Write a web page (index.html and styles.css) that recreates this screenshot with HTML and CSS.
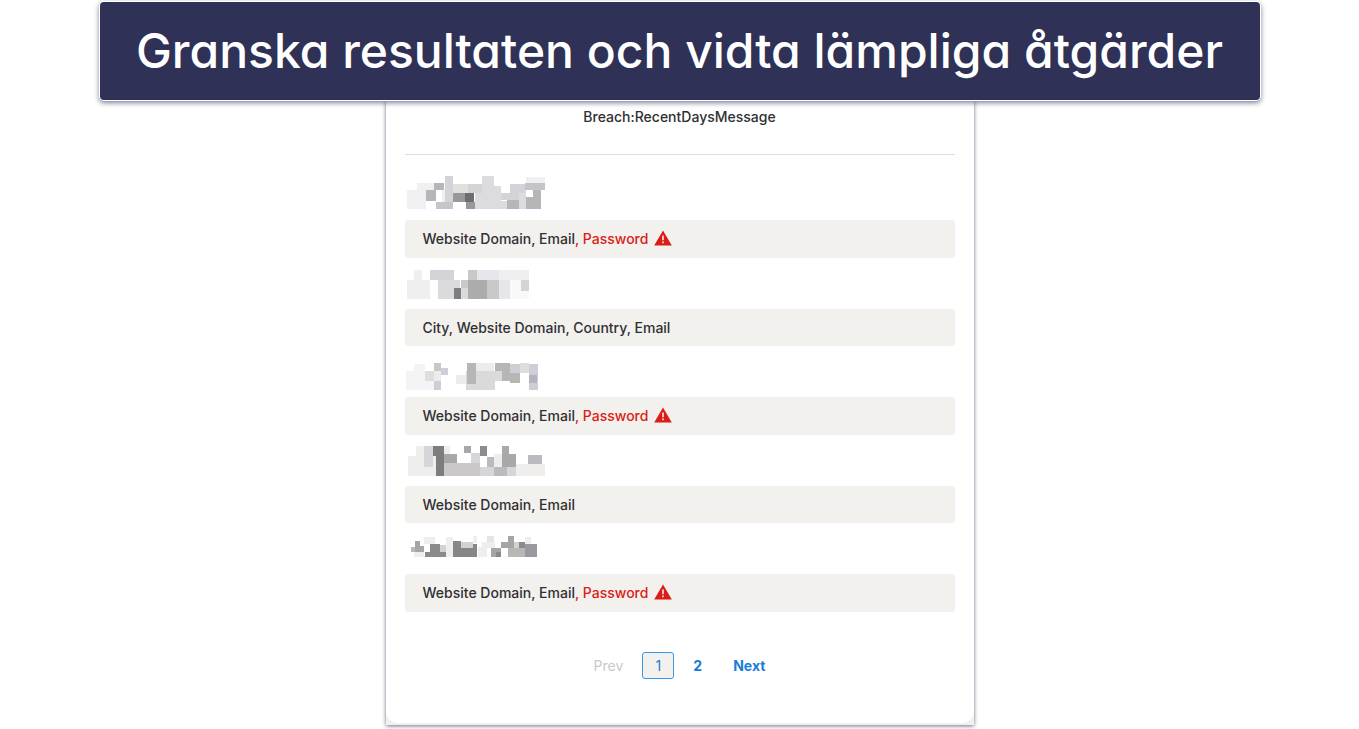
FILE: index.html
```html
<!DOCTYPE html>
<html lang="sv">
<head>
    <meta charset="UTF-8">
    <meta name="viewport" content="width=device-width, initial-scale=1.0">
    <title>Granska resultaten</title>
    <link rel="stylesheet" href="styles.css">
</head>
<body>
    <h1 class="banner">Granska resultaten och vidta lämpliga åtgärder</h1>
    <main class="frame">
        <div class="card">
            <p class="message">Breach:RecentDaysMessage</p>
            <ul class="breaches">
                <li>
                    <svg class="redacted" viewBox="30 -3 480 153" shape-rendering="crispEdges" aria-hidden="true">
                        <path fill="#f0f0f2" d="M35 60h58v57H35zM65 38h52v22H65zM393 20h57v20h-57zM140 60h10v36h-10z"/>
                        <path fill="#dcdcde" d="M239 68h78v49h-78zM260 18h37v50h-37zM297 47h20v21h-20zM317 93h20v24h-20zM372 60h20v57h-20z"/>
                        <path fill="#e1e0de" d="M174 41h44v28h-44z"/>
                        <path fill="#d3d3d8" d="M149 18h24v78h-24zM218 41h42v28h-42zM345 41h45v28h-45zM317 68h27v23h-27zM344 68h28v22h-28z"/>
                        <path fill="#c4c4ca" d="M390 40h60v20h-60zM124 96h49v21h-49z"/>
                        <path fill="#b6b6b8" d="M117 38h31v22h-31zM93 60h31v34H93zM337 90h35v27h-35zM393 80h45v37h-45zM413 60h25v20h-25z"/>
                        <path fill="#97979d" d="M174 69h36v27h-36zM212 96h27v21h-27z"/>
                        <path fill="#6d6d6f" d="M210 69h26v27h-26z"/>
                    </svg>
                    <p class="exposed">Website Domain, Email<span class="danger">, Password <svg class="warning" viewBox="0 0 18 16" role="img" aria-label="Warning"><path fill="#dc1c16" d="M9 0.5 17.8 15.5H0.2z"/><path stroke="#f2f1ed" stroke-width="1.6" d="M9 5.4v4.8M9 11.6v1.7"/></svg></span></p>
                </li>
                <li>
                    <svg class="redacted" viewBox="30 -12 480 153" shape-rendering="crispEdges" aria-hidden="true">
                        <path fill="#f0eff0" d="M56 24h25v30H56zM36 54h69v57H36zM312 24h90v30h-90z"/>
                        <path fill="#f9f9fa" d="M344 54h34v57h-34zM378 87h24v24h-24z"/>
                        <path fill="#e7e7eb" d="M246 24h66v30h-66zM312 54h32v57h-32z"/>
                        <path fill="#d3d3d8" d="M105 24h73v30h-73zM378 54h24v33h-24z"/>
                        <path fill="#dadbdc" d="M129 54h66v57h-66zM197 78h22v33h-22z"/>
                        <path fill="#c9c9cb" d="M220 24h26v30h-26zM276 54h36v57h-36zM197 54h24v24h-24z"/>
                        <path fill="#acacaa" d="M220 54h56v57h-56z"/>
                        <path fill="#7d7d7f" d="M178 78h19v33h-19z"/>
                    </svg>
                    <p class="exposed">City, Website Domain, Country, Email</p>
                </li>
                <li>
                    <svg class="redacted" viewBox="30 -24 480 153" shape-rendering="crispEdges" aria-hidden="true">
                        <path fill="#f3f4f5" d="M33 51h84v57H33zM56 30h35v21H56z"/>
                        <path fill="#ececec" d="M183 63h29v27h-29zM117 52h21v29h-21zM242 26h56v26h-56z"/>
                        <path fill="#dfdedc" d="M91 52h26v29H91zM375 26h28v30h-28z"/>
                        <path fill="#dadadb" d="M212 52h112v28H212zM212 80h87v28h-87z"/>
                        <path fill="#cecfd6" d="M138 42h22v21h-22zM117 81h21v27h-21zM345 30h30v27h-30zM403 30h25v78h-25z"/>
                        <path fill="#c9c8c6" d="M117 26h21v26h-21z"/>
                        <path fill="#b4b5bc" d="M299 26h24v26h-24zM403 63h23v23h-23z"/>
                        <path fill="#b6b6b5" d="M216 26h26v63h-26zM321 26h24v54h-24zM345 57h30v30h-30z"/>
                    </svg>
                    <p class="exposed">Website Domain, Email<span class="danger">, Password <svg class="warning" viewBox="0 0 18 16" role="img" aria-label="Warning"><path fill="#dc1c16" d="M9 0.5 17.8 15.5H0.2z"/><path stroke="#f2f1ed" stroke-width="1.6" d="M9 5.4v4.8M9 11.6v1.7"/></svg></span></p>
                </li>
                <li>
                    <svg class="redacted" viewBox="30 -15 480 153" shape-rendering="crispEdges" aria-hidden="true">
                        <path fill="#efeeed" d="M39 49h84v58H39zM64 18h26v31H64zM363 72h87v35h-87z"/>
                        <path fill="#ededf0" d="M297 42h25v39h-25zM148 18h18v25h-18z"/>
                        <path fill="#d5d5da" d="M88 18h25v63H88zM228 38h27v32h-27zM255 81h42v26h-42zM336 81h27v26h-27z"/>
                        <path fill="#cac8c8" d="M148 69h107v38H148z"/>
                        <path fill="#bbbbbf" d="M276 51h20v30h-20zM297 81h39v26h-39zM399 44h42v28h-42z"/>
                        <path fill="#a8a8a9" d="M146 43h41v26h-41zM207 18h21v21h-21zM321 18h21v63h-21zM342 42h21v39h-21z"/>
                        <path fill="#8c8c8f" d="M255 18h21v30h-21z"/>
                        <path fill="#7d7d80" d="M113 18h34v31h-34zM124 49h22v58h-22z"/>
                    </svg>
                    <p class="exposed">Website Domain, Email</p>
                </li>
                <li>
                    <svg class="redacted" viewBox="30 -21 480 153" shape-rendering="crispEdges" aria-hidden="true">
                        <path fill="#eeeeef" d="M88 20h32v22H88zM152 20h23v60h-23zM234 18h13v22h-13zM249 50h27v30h-27zM262 36h37v18h-37zM390 20h19v21h-19zM58 66h30v14H58z"/>
                        <path fill="#e3e3e8" d="M276 18h22v18h-22z"/>
                        <path fill="#d2d2d2" d="M134 44h20v23h-20zM197 35h37v20h-37zM357 36h15v20h-15z"/>
                        <path fill="#b7b7b6" d="M48 52h13v13H48zM340 55h77v25h-77z"/>
                        <path fill="#a5a5a5" d="M61 34h13v14H61zM61 48h26v18H61zM318 36h24v18h-24zM288 54h30v26h-30zM340 18h17v37h-17z"/>
                        <path fill="#8b8b8d" d="M106 43h28v23h-28zM90 66h64v14H90zM302 66h16v14h-16zM372 36h17v19h-17z"/>
                        <path fill="#868687" d="M175 34h22v46h-22zM197 55h37v25h-37zM234 41h12v39h-12z"/>
                        <path fill="#9a999f" d="M389 42h37v38h-37z"/>
                    </svg>
                    <p class="exposed">Website Domain, Email<span class="danger">, Password <svg class="warning" viewBox="0 0 18 16" role="img" aria-label="Warning"><path fill="#dc1c16" d="M9 0.5 17.8 15.5H0.2z"/><path stroke="#f2f1ed" stroke-width="1.6" d="M9 5.4v4.8M9 11.6v1.7"/></svg></span></p>
                </li>
            </ul>
            <nav class="pagination" aria-label="Pages">
                <button type="button" class="prev" disabled>Prev</button>
                <button type="button" class="current" aria-current="page">1</button>
                <button type="button">2</button>
                <button type="button" class="next">Next</button>
            </nav>
        </div>
    </main>
</body>
</html>
```

FILE: styles.css
```css
* {
    box-sizing: border-box;
}
body {
    margin: 0;
    padding: 2px 16px 4px;
    background: #fff;
    font-family: Inter, "Liberation Sans", sans-serif;
    color: #303033;
}
.banner {
    position: relative;
    max-width: 1160px;
    margin: 0 auto;
    padding: 19px 16px;
    border-radius: 4px;
    background: #2f3156;
    box-shadow: 0 0 0 1px #fff, 0 2px 5px 1px rgba(47, 49, 86, 0.6);
    color: #fff;
    font-size: 48px;
    font-weight: 500;
    /* single-storey a */
    font-feature-settings: "cv11";
    line-height: 60px;
    text-align: center;
}
.frame {
    max-width: 588px;
    margin: 0 auto;
    padding-bottom: 2px;
    background: #f2f1ed;
    box-shadow: 0 1px 4px rgba(47, 49, 86, 0.7);
}
.card {
    padding: 7px 19px 44px;
    border-radius: 0 0 12px 12px;
    background: #fff;
}
.message {
    margin: 0;
    padding-bottom: 27px;
    border-bottom: 1px solid #dededf;
    font-size: 14px;
    font-weight: 500;
    line-height: 20px;
    text-align: center;
}
.breaches {
    margin: 14px 0 0;
    padding: 0;
    list-style: none;
}
.redacted {
    display: block;
    width: 160px;
    height: 51px;
}
.exposed {
    margin: 0;
    padding: 9px 18px;
    border-radius: 3px;
    background: #f2f1ed;
    font-size: 14px;
    font-weight: 500;
    line-height: 19px;
}
.exposed:has(.danger) {
    line-height: 20px;
}
.danger {
    color: #dc1c16;
}
.warning {
    width: 18px;
    height: 16px;
    margin-left: 2px;
    vertical-align: -2px;
}
.pagination {
    display: flex;
    justify-content: center;
    align-items: center;
    margin-top: 40px;
}
.pagination button {
    height: 27px;
    padding: 0 18px;
    border: 1px solid transparent;
    border-radius: 3px;
    background: none;
    color: #177ddc;
    font-family: inherit;
    font-size: 14px;
    font-weight: 700;
    cursor: pointer;
}
.pagination .prev {
    color: #c9c9cb;
    font-weight: 400;
    cursor: default;
}
.pagination .current {
    width: 32px;
    padding: 0;
    border-color: #3b96e8;
    background: #f2f1ed;
    font-weight: 400;
}
.pagination .next {
    padding-left: 11px;
}
```
